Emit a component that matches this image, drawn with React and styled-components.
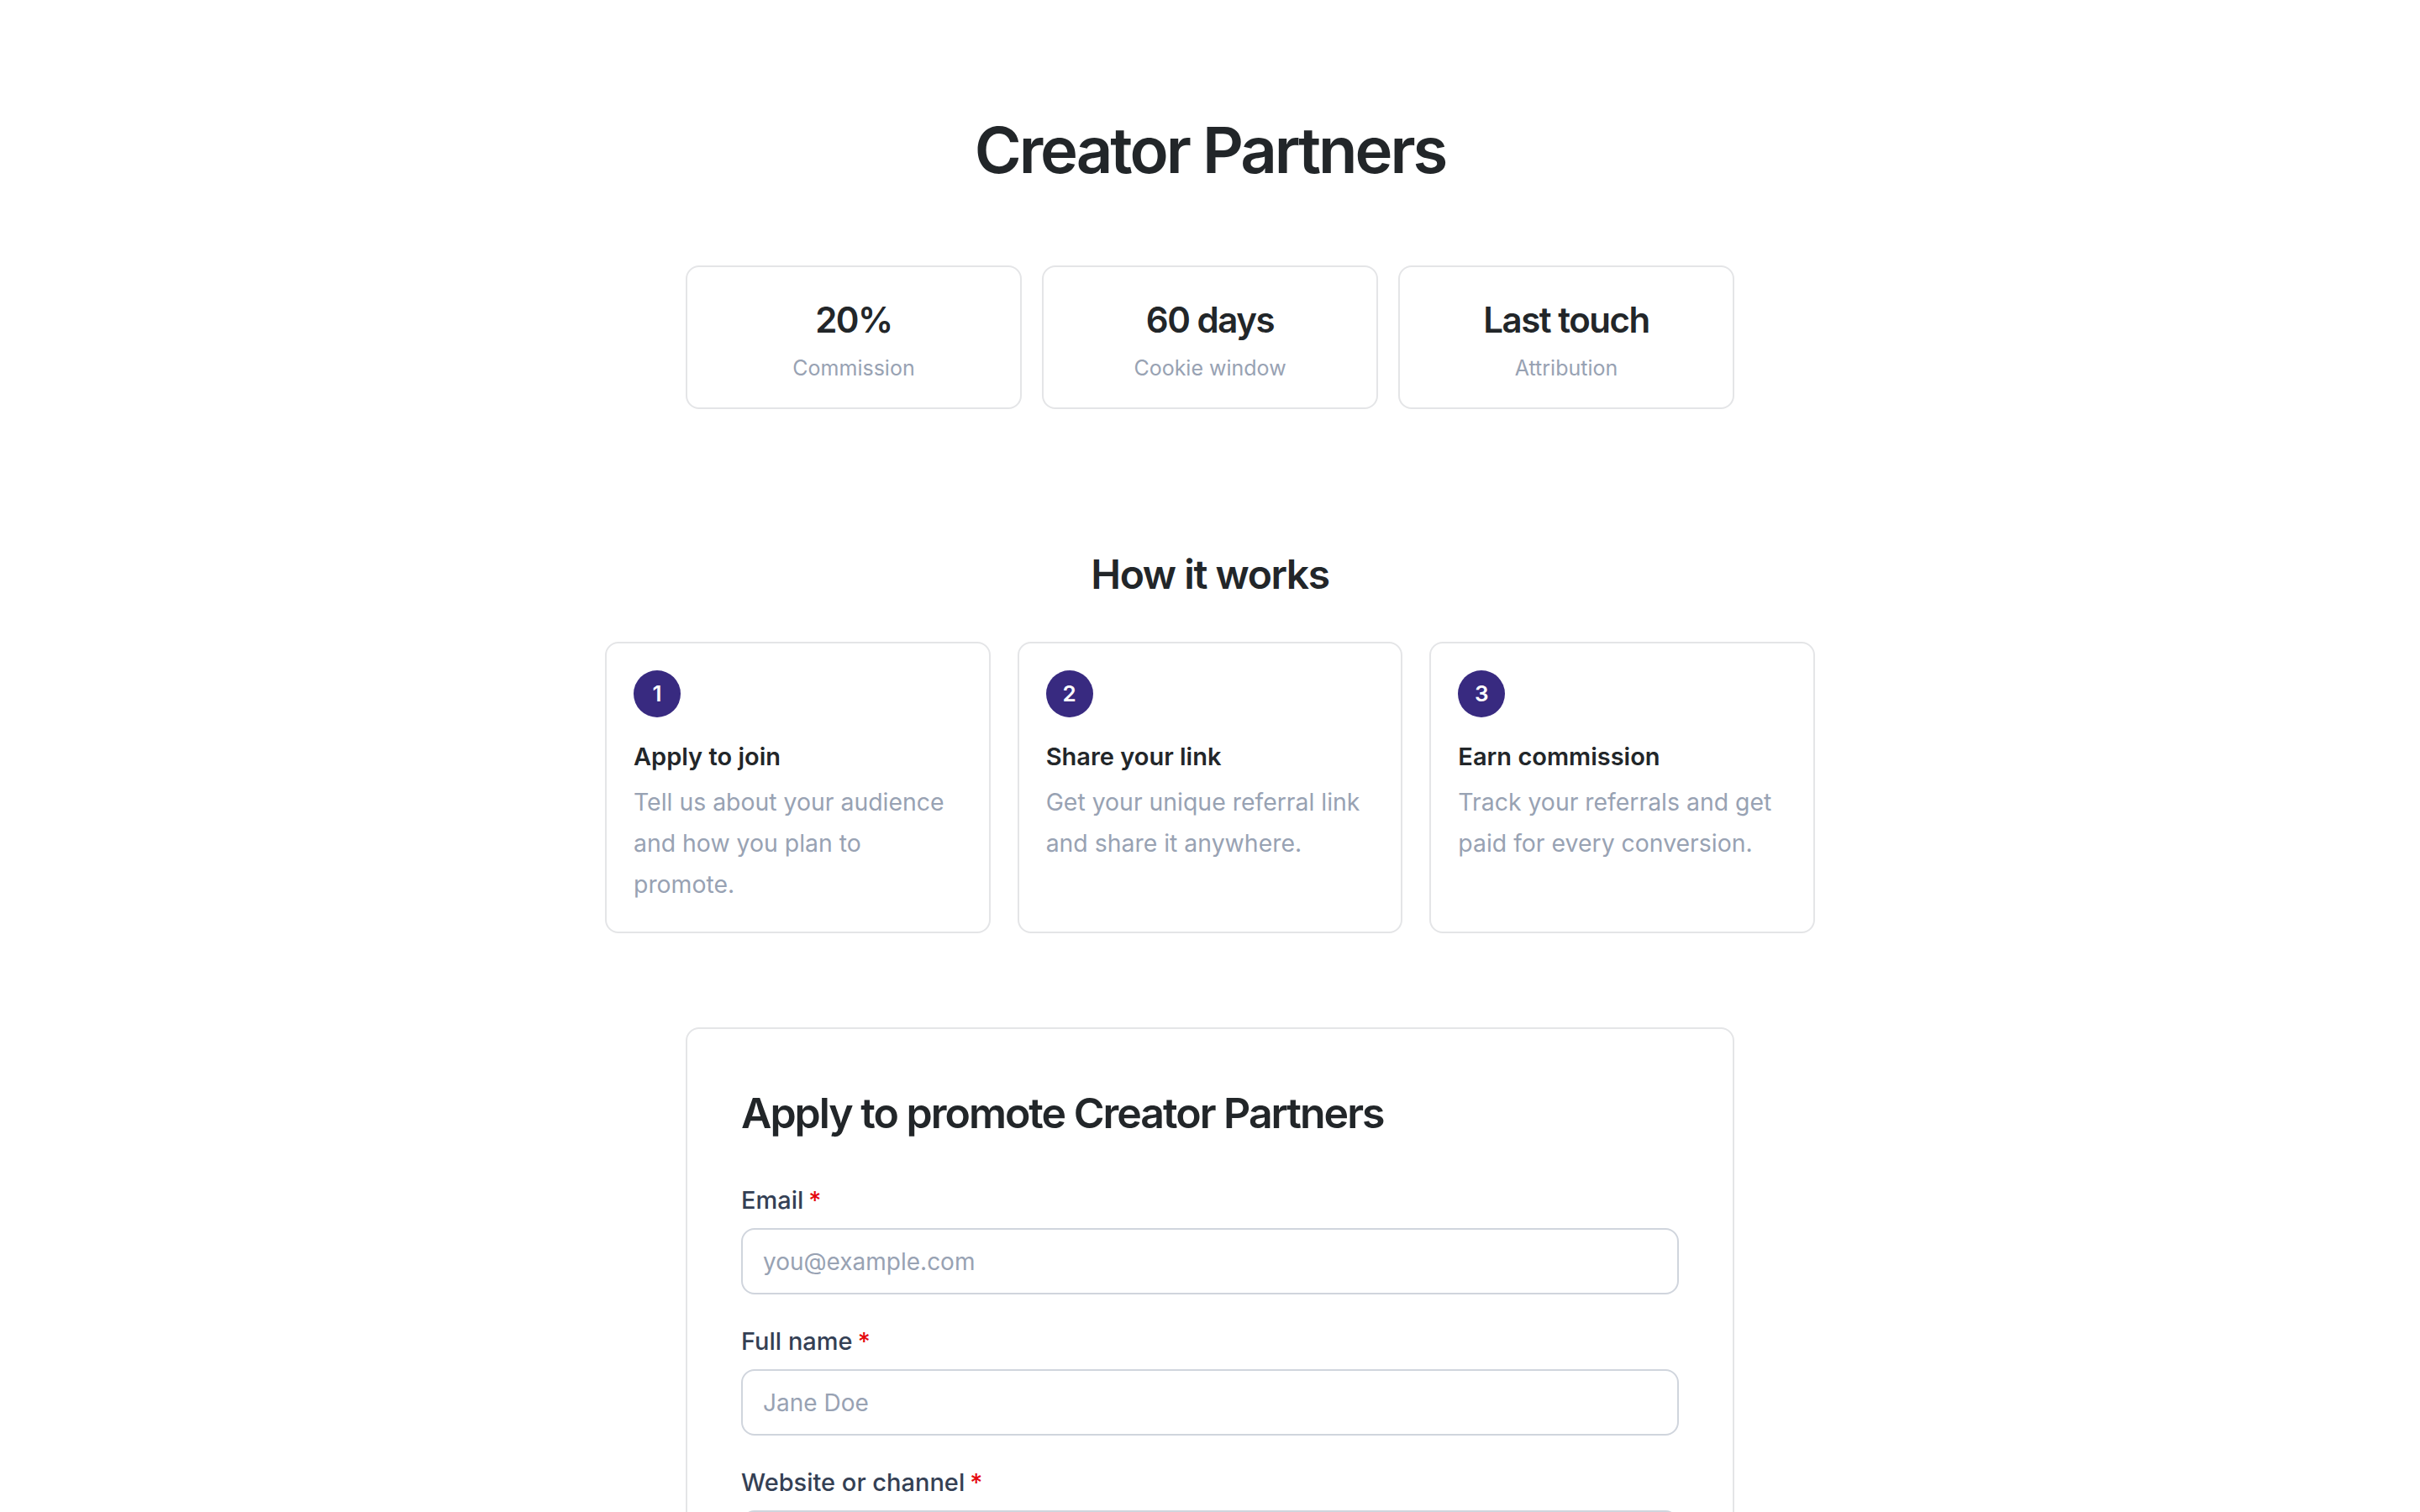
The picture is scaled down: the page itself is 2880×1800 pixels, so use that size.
import React from "react";
import styled, { createGlobalStyle } from "styled-components";

const GlobalStyle = createGlobalStyle`
  *, *::before, *::after { box-sizing: border-box; }
  html, body { margin: 0; padding: 0; background: #ffffff; }
  body {
    font-family: Inter, "Noto Sans", "Liberation Sans", sans-serif;
    color: #222629;
    -webkit-font-smoothing: antialiased;
  }
`;

const Page = styled.main`
  display: flex;
  flex-direction: column;
  align-items: center;
  padding: 130px 48px 160px;
`;

const Title = styled.h1`
  margin: 0 0 90px;
  font-size: 76px;
  line-height: 96px;
  font-weight: 600;
  letter-spacing: -0.04em;
  color: #222629;
  text-align: center;
`;

const StatRow = styled.div`
  display: grid;
  grid-template-columns: repeat(3, 1fr);
  gap: 24px;
  width: 1248px;
`;

const StatCard = styled.div`
  border: 2px solid #e4e5e7;
  border-radius: 16px;
  padding: 33px 24px 29px;
  text-align: center;
  background: #fff;
`;

const StatValue = styled.div`
  font-size: 42px;
  line-height: 60px;
  font-weight: 600;
  letter-spacing: -0.035em;
  color: #222629;
`;

const StatLabel = styled.div`
  margin-top: 9px;
  font-size: 25px;
  line-height: 36px;
  color: #98a2b3;
`;

const SectionTitle = styled.h2`
  margin: 165px 0 48px;
  font-size: 48px;
  line-height: 64px;
  font-weight: 600;
  letter-spacing: -0.03em;
  color: #222629;
  text-align: center;
`;

const StepGrid = styled.div`
  display: grid;
  grid-template-columns: repeat(3, 1fr);
  gap: 32px;
  width: 1440px;
`;

const StepCard = styled.div`
  border: 2px solid #e4e5e7;
  border-radius: 16px;
  padding: 32px;
  background: #fff;
`;

const StepNumber = styled.div`
  width: 56px;
  height: 56px;
  border-radius: 50%;
  background: #382a80;
  color: #ffffff;
  display: flex;
  align-items: center;
  justify-content: center;
  font-size: 26px;
  font-weight: 600;
  line-height: 1;
`;

const StepTitle = styled.h3`
  margin: 25px 0 0;
  font-size: 29px;
  line-height: 44px;
  font-weight: 600;
  color: #222629;
`;

const StepText = styled.p`
  margin: 7px 0 0;
  font-size: 28.4px;
  line-height: 49px;
  color: #98a2b3;
`;

const FormCard = styled.section`
  margin-top: 112px;
  width: 1248px;
  border: 2px solid #e4e5e7;
  border-radius: 16px;
  padding: 64px;
  background: #fff;
`;

const FormTitle = styled.h2`
  margin: 0 0 46px;
  font-size: 50px;
  line-height: 72px;
  font-weight: 600;
  letter-spacing: -0.04em;
  color: #222629;
`;

const Fields = styled.form`
  display: flex;
  flex-direction: column;
  gap: 34px;
`;

const Field = styled.div`
  display: flex;
  flex-direction: column;
`;

const Label = styled.label`
  margin-bottom: 11px;
  font-size: 29px;
  line-height: 44px;
  font-weight: 500;
  color: #344054;
`;

const Required = styled.span`
  margin-left: 6px;
  color: #e5090f;
`;

const Input = styled.input`
  width: 100%;
  height: 79px;
  padding: 16px 24px;
  font-family: inherit;
  font-size: 28px;
  line-height: 42px;
  color: #222629;
  border: 2px solid #d0d5dd;
  border-radius: 16px;
  background: #fff;
  outline: none;
  &::placeholder { color: #98a2b3; }
`;

const Submit = styled.button`
  margin-top: 16px;
  padding: 20px 32px;
  font-family: inherit;
  font-size: 29px;
  font-weight: 600;
  color: #fff;
  background: #382a80;
  border: none;
  border-radius: 16px;
`;

const stats = [
  { value: "20%", label: "Commission" },
  { value: "60 days", label: "Cookie window" },
  { value: "Last touch", label: "Attribution" },
];

const steps = [
  { title: "Apply to join", text: "Tell us about your audience and how you plan to promote." },
  { title: "Share your link", text: "Get your unique referral link and share it anywhere." },
  { title: "Earn commission", text: "Track your referrals and get paid for every conversion." },
];

const fields = [
  { id: "email", label: "Email", placeholder: "you@example.com", type: "email" },
  { id: "name", label: "Full name", placeholder: "Jane Doe", type: "text" },
  { id: "site", label: "Website or channel", placeholder: "https://", type: "text" },
];

export default function App() {
  return (
    <>
      <GlobalStyle />
      <Page>
        <Title>Creator Partners</Title>
        <StatRow>
          {stats.map((s) => (
            <StatCard key={s.label}>
              <StatValue>{s.value}</StatValue>
              <StatLabel>{s.label}</StatLabel>
            </StatCard>
          ))}
        </StatRow>

        <SectionTitle>How it works</SectionTitle>
        <StepGrid>
          {steps.map((s, i) => (
            <StepCard key={s.title}>
              <StepNumber>{i + 1}</StepNumber>
              <StepTitle>{s.title}</StepTitle>
              <StepText>{s.text}</StepText>
            </StepCard>
          ))}
        </StepGrid>

        <FormCard>
          <FormTitle>Apply to promote Creator Partners</FormTitle>
          <Fields onSubmit={(e) => e.preventDefault()}>
            {fields.map((f) => (
              <Field key={f.id}>
                <Label htmlFor={f.id}>
                  {f.label}
                  <Required>*</Required>
                </Label>
                <Input id={f.id} type={f.type} placeholder={f.placeholder} />
              </Field>
            ))}
            <Submit type="submit">Submit application</Submit>
          </Fields>
        </FormCard>
      </Page>
    </>
  );
}
